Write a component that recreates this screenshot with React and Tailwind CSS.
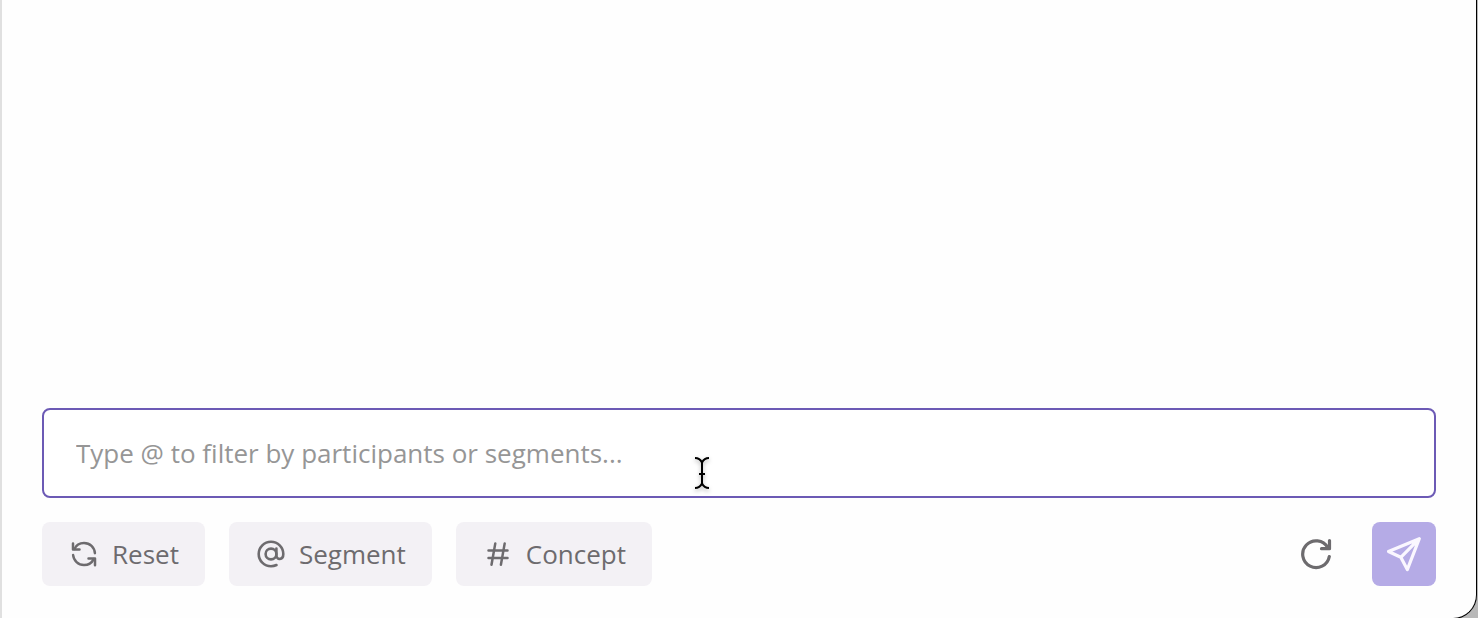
import React from "react";

function ResetIcon() {
  return (
    <svg className="size-7 shrink-0" viewBox="0 0 28 28" fill="none" stroke="currentColor" strokeWidth="2.5" aria-hidden="true">
      <path d="M4.400 8.900C6 5.400 9.700 3 14 3c6 0 10.500 4.400 10.900 10.200" strokeLinecap="round" />
      <path d="M3.100 15C3.600 20.600 8.200 25 14 25c4.200 0 7.900-2.300 9.700-5.900" strokeLinecap="round" />
      <path d="M3 3.500V9.500h6.500M25 25.300V18.500h-6.500" strokeLinecap="round" strokeLinejoin="round" />
    </svg>
  );
}

function AtIcon() {
  return (
    <svg className="size-7 shrink-0" viewBox="0 0 28 28" fill="none" stroke="currentColor" strokeWidth="2.600" strokeLinecap="round" aria-hidden="true">
      <circle cx="14" cy="14" r="5.400" />
      <path d="M19.400 8.600v6.600c0 5.200 6.900 5.100 6.900-1.200A12.300 12.300 0 1 0 14 26.300c2 0 3.900-.5 5.500-1.300" />
    </svg>
  );
}

function HashIcon() {
  return (
    <svg className="size-7 shrink-0" viewBox="0 0 28 28" fill="none" stroke="currentColor" strokeWidth="2.500" strokeLinecap="round" aria-hidden="true">
      <path d="M4.500 10.400h19M4.500 18h19M11.300 3.400L7.500 24.800M20.700 3.400L16.900 24.800" />
    </svg>
  );
}

function RefreshIcon() {
  return (
    <svg className="size-8" viewBox="0 0 32 32" fill="none" stroke="currentColor" strokeWidth="3.200" aria-hidden="true">
      <path d="M29.300 18.500A13.400 13.400 0 1 1 27.700 9.500" strokeLinecap="round" />
      <path d="M29.500 2.500V10.700H21.500" strokeLinecap="round" strokeLinejoin="round" />
    </svg>
  );
}

function SendIcon() {
  return (
    <svg className="size-10" viewBox="0 0 40 40" fill="none" stroke="currentColor" strokeWidth="3.200" strokeLinecap="round" strokeLinejoin="round" aria-hidden="true">
      <path d="M35.300 4.700L4.500 17.500l12.300 5.800L23.300 35.600zM16.800 23.300L35.300 4.700" />
    </svg>
  );
}

function TextCursor() {
  return (
    <svg
      className="pointer-events-none absolute top-[47px] left-[650px] h-9 w-5 drop-shadow-[0_2px_2px_rgba(0,0,0,0.3)]"
      viewBox="0 0 20 36"
      fill="none"
      stroke="#000"
      strokeWidth="2"
      aria-hidden="true"
    >
      <path d="M3 3c3.500 0 5.500 1.500 7 4.500C11.500 4.500 13.500 3 17 3M10 7v21M3 33c3.500 0 5.500-1.500 7-4.500 1.500 3 3.500 4.500 7 4.500M7 19h6" />
    </svg>
  );
}

function Chip({ icon, children }) {
  return (
    <button type="button" className="flex h-16 items-center gap-3.5 rounded-lg bg-[#f3f1f5] pr-[26px] pl-7 text-[26px] leading-8 font-medium text-[#6d6b6e]">
      {icon}
      {children}
    </button>
  );
}

export default function App() {
  return (
    <div className="h-screen overflow-hidden bg-[#b8b8b8] pr-px font-['Open_Sans','Noto_Sans',sans-serif]">
      <main className="flex min-h-[calc(100vh+1px)] flex-col justify-end rounded-br-3xl border-r border-b border-l-2 border-r-black border-b-black border-l-[#e0e0e0] bg-[#fefefe] px-10 pb-8">
        <form className="flex flex-col gap-6" onSubmit={(e) => e.preventDefault()}>
          <div className="relative">
            <input
              type="text"
              aria-label="Message"
              placeholder="Type @ to filter by participants or segments..."
              className="block h-[90px] w-full rounded-lg border-2 border-[#6c5ab5] bg-white px-8 text-[26px] text-[#4b4b4b] outline-none placeholder:text-[#969696]"
            />
            <TextCursor />
          </div>
          <div className="flex items-center gap-6">
            <Chip icon={<ResetIcon />}>Reset</Chip>
            <Chip icon={<AtIcon />}>Segment</Chip>
            <Chip icon={<HashIcon />}>Concept</Chip>
            <div className="ml-auto flex items-center gap-6">
              <button type="button" aria-label="Refresh" className="flex size-16 items-center justify-center rounded-lg text-[#6d6b6e]">
                <RefreshIcon />
              </button>
              <button type="submit" aria-label="Send" className="flex size-16 items-center justify-center rounded-lg bg-[#b5abe6] text-[#faf7ff]">
                <SendIcon />
              </button>
            </div>
          </div>
        </form>
      </main>
    </div>
  );
}
